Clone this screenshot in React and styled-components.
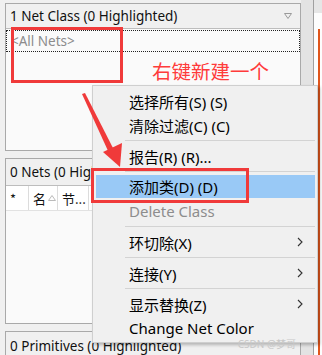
import React from "react";
import styled, { createGlobalStyle } from "styled-components";

//======================================================
const GlobalStyle = createGlobalStyle`
     html, body {
          margin: 0;
          padding: 0;
          background: #f0f0f0;
     }
     body {
          font-family: "Noto Sans", "Noto Sans CJK SC", sans-serif;
     }
`;
//======================================================
const Screen = styled.div`
     position: relative;
     width: 322px;
     height: 355px;
     overflow: hidden;
     display: flex;
     background: #f0f0f0;
`;

const Column = styled.div`
     width: 296px;
     margin-left: 5px;
     padding-top: 3px;
     display: flex;
     flex-direction: column;
     gap: 7px;
`;

const Panel = styled.div`
     height: ${(p) => p.h}px;
     flex-shrink: 0;
     border: 1px solid #a9a9a9;
     display: flex;
     flex-direction: column;
     background: #fafafa;
     box-sizing: border-box;
`;

const Header = styled.div`
     height: ${(p) => p.h || 24}px;
     flex-shrink: 0;
     display: flex;
     align-items: center;
     justify-content: space-between;
     padding: 0 8px 0 4px;
     background: #f0f0f0;
     border-bottom: 1px solid #bdbdbd;
     font-size: 13.5px;
     color: #111;
     white-space: nowrap;
`;

const FocusRow = styled.div`
     height: 20px;
     margin-top: 1px;
     border: 1px dotted #222;
     display: flex;
     align-items: center;
     padding-left: 4px;
     font-size: 13.5px;
     color: #8c8c8c;
`;

const ColHeads = styled.div`
     height: 24px;
     display: flex;
     background: #fff;
     border-bottom: 1px solid #e2e2e2;
     font-family: "Noto Sans CJK SC", sans-serif;
     font-size: 13px;
     color: #111;
`;

const ColHead = styled.div`
     width: ${(p) => p.w}px;
     display: flex;
     align-items: center;
     gap: 2px;
     padding-left: 4px;
     border-right: 1px solid #dcdcdc;
     box-sizing: border-box;
`;

const SideStrip = styled.div`
     width: 12px;
     background: #e3e3e3;
     border-right: 1px solid #a0a0a0;
`;

const SideEdge = styled.div`
     flex: 1;
     background: #fdfdfd;
     border-top: 13px solid #e6e6e6;
     display: flex;
     justify-content: flex-end;
     padding-right: 2px;
`;

const OrangeLine = styled.div`
     width: 2px;
     margin-top: 16px;
     background: #e0561c;
`;

//======================================================
const Menu = styled.div`
     position: absolute;
     left: 92px;
     top: 85px;
     width: 226px;
     padding: 3px 2px 2px 3px;
     background: #f0f0f0;
     border: 1px solid #cfcfcf;
     box-shadow: 2px 2px 3px rgba(0, 0, 0, 0.25);
     box-sizing: border-box;
     font-family: "Noto Sans", "Noto Sans CJK SC", sans-serif;
     font-size: 15px;
`;

const Item = styled.div`
     height: ${(p) => (p.hot ? 23 : 24)}px;
     margin-bottom: ${(p) => (p.hot ? 1 : 0)}px;
     display: flex;
     align-items: center;
     justify-content: space-between;
     padding: 0 12px 0 33px;
     background: ${(p) => (p.hot ? "#99c9f6" : "transparent")};
     color: ${(p) => (p.off ? "#8d8d8d" : "#000")};
     white-space: nowrap;
`;

const Sep = styled.div`
     height: 7px;
     display: flex;
     align-items: center;
     padding-left: 29px;
     &::after {
          content: "";
          flex: 1;
          height: 1px;
          background: #d3d3d3;
     }
`;

//======================================================
const RedBox = styled.div`
     position: absolute;
     left: ${(p) => p.x}px;
     top: ${(p) => p.y}px;
     width: ${(p) => p.w}px;
     height: ${(p) => p.h}px;
     border: 3px solid #f03a3a;
     box-sizing: border-box;
`;

const Note = styled.div`
     position: absolute;
     left: 152px;
     top: 58px;
     font-family: "Noto Sans CJK SC", sans-serif;
     font-size: 19.5px;
     line-height: 26px;
     color: #ff3b3b;
`;

const Overlay = styled.svg`
     position: absolute;
     left: 0;
     top: 0;
     pointer-events: none;
`;

const Mark = styled.div`
     position: absolute;
     right: 26px;
     bottom: 4px;
     font-size: 10px;
     color: #c8c8c8;
     font-family: "Noto Sans", "Noto Sans CJK SC", sans-serif;
`;

//======================================================
const Chevron = () => (
     <svg width="6" height="10" viewBox="0 0 6 10">
          <path d="M1 1 L5 5 L1 9" fill="none" stroke="#333" strokeWidth="1.1" />
     </svg>
);

const SortMark = ({ color = "#9a9a9a" }) => (
     <svg width="8" height="6" viewBox="0 0 8 6">
          <path d="M0.5 0.5 H7.5 L4 5.5 Z" fill="none" stroke={color} strokeWidth="1" />
     </svg>
);

const UpMark = () => (
     <svg width="8" height="6" viewBox="0 0 8 6">
          <path d="M0.5 5.5 H7.5 L4 0.5 Z" fill="#fff" stroke="#bbb" strokeWidth="1" />
     </svg>
);

const menuItems = [
     { t: "选择所有(S) (S)" },
     { t: "清除过滤(C) (C)" },
     { sep: true },
     { t: "报告(R) (R)..." },
     { sep: true },
     { t: "添加类(D) (D)", hot: true },
     { t: "Delete Class", off: true },
     { sep: true },
     { t: "环切除(X)", sub: true },
     { sep: true },
     { t: "连接(Y)", sub: true },
     { sep: true },
     { t: "显示替换(Z)", sub: true },
     { t: "Change Net Color" },
];

//======================================================
const App = () => {
     return (
          <>
               <GlobalStyle />
               <Screen>
                    <Column>
                         <Panel h={148}>
                              <Header>
                                   <span>1 Net Class (0 Highlighted)</span>
                                   <SortMark />
                              </Header>
                              <FocusRow>&lt;All Nets&gt;</FocusRow>
                         </Panel>
                         <Panel h={166}>
                              <Header h={26}>
                                   <span>0 Nets (0 Highlighted)</span>
                              </Header>
                              <ColHeads>
                                   <ColHead w={23}>*</ColHead>
                                   <ColHead w={29}>
                                        名<UpMark />
                                   </ColHead>
                                   <ColHead w={31}>节...</ColHead>
                                   <ColHead w={60}>颜色</ColHead>
                              </ColHeads>
                         </Panel>
                         <Panel h={40}>
                              <Header h={28}>
                                   <span>0 Primitives (0 Highlighted)</span>
                              </Header>
                         </Panel>
                    </Column>
                    <SideStrip />
                    <SideEdge>
                         <OrangeLine />
                    </SideEdge>

                    <Note>右键新建一个</Note>
                    <RedBox x={11} y={27} w={112} h={56} />

                    <Menu>
                         {menuItems.map((m, i) =>
                              m.sep ? (
                                   <Sep key={i} />
                              ) : (
                                   <Item key={i} hot={m.hot} off={m.off}>
                                        <span>{m.t}</span>
                                        {m.sub && <Chevron />}
                                   </Item>
                              )
                         )}
                    </Menu>

                    <RedBox x={91} y={168} w={158} h={35} />
                    <Overlay width="322" height="355" viewBox="0 0 322 355">
                         <polygon points="82,94 85,93 114,150 109,153" fill="#f03a3a" />
                         <polygon points="103,152 122,143 120,167" fill="#f03a3a" />
                    </Overlay>
                    <Mark>CSDN @梦哥</Mark>
               </Screen>
          </>
     );
};

export default App;
